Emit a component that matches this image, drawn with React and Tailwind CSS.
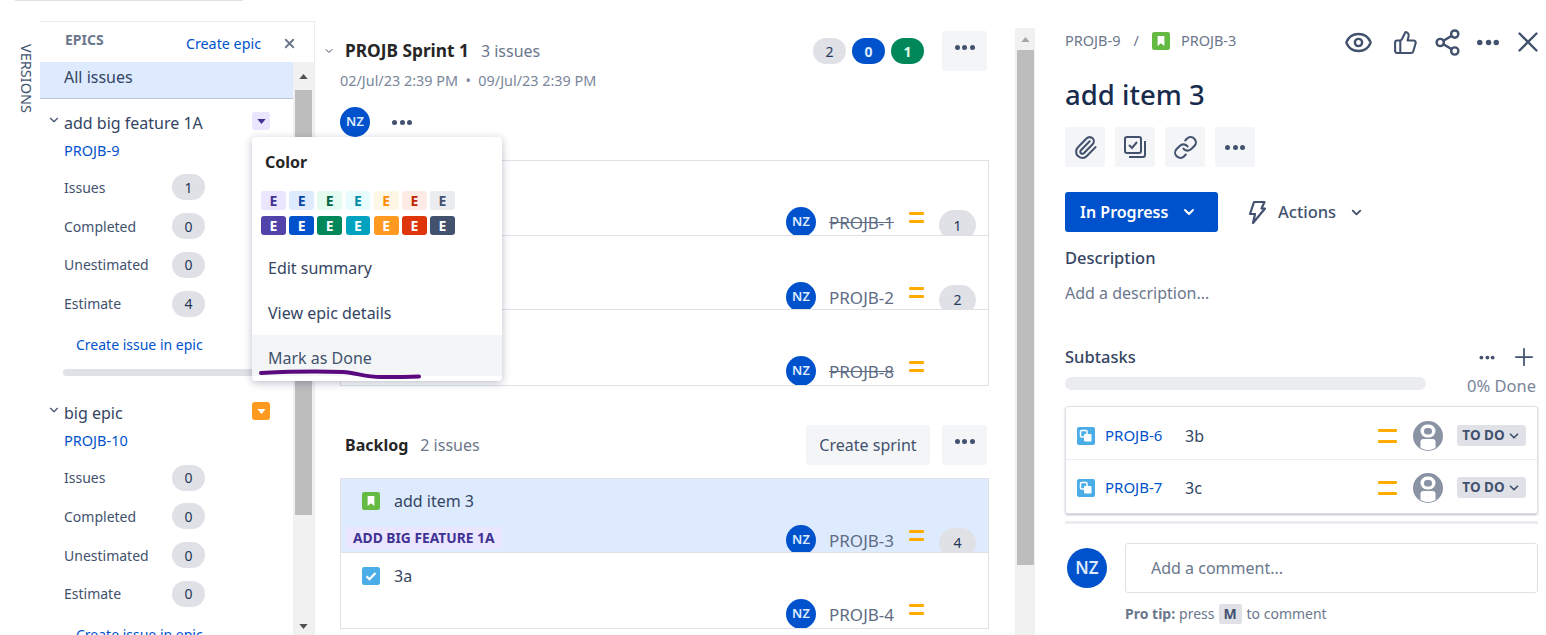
import React from 'react';
import { ChevronDown, Eye, Link, Paperclip, Plus, Share2, ThumbsUp, X } from 'lucide-react';

// --- SMALL SHARED PIECES ---
function Dots({ className = '' }) {
  return (
    <span className={`flex items-center gap-[2.5px] ${className}`}>
      <i className="w-[5px] h-[5px] rounded-full bg-[#42526e]" />
      <i className="w-[5px] h-[5px] rounded-full bg-[#42526e]" />
      <i className="w-[5px] h-[5px] rounded-full bg-[#42526e]" />
    </span>
  );
}

function Avatar({ size = 'w-[30px] h-[30px] text-[13px]' }) {
  return (
    <div className={`${size} shrink-0 rounded-full bg-[#0052cc] text-[#deebff] font-semibold flex items-center justify-center`}>
      NZ
    </div>
  );
}

function Priority({ wide }) {
  return (
    <span className={`flex flex-col ${wide ? 'w-[19px] gap-[8px]' : 'w-[15px] gap-[5px]'}`}>
      <i className="h-[3px] bg-[#ffab00] rounded-[1px]" />
      <i className="h-[3px] bg-[#ffab00] rounded-[1px]" />
    </span>
  );
}

function Pill({ children, className = 'bg-[#dfe1e6] text-[#253858]' }) {
  return (
    <span className={`w-[33px] h-[26px] rounded-full flex items-center justify-center text-[14px] ${className}`}>
      {children}
    </span>
  );
}

function StoryIcon() {
  return (
    <svg viewBox="0 0 16 16" className="w-[18px] h-[18px] shrink-0">
      <rect width="16" height="16" rx="2" fill="#65ba43" />
      <path d="M5 3.5h6v9l-3-2.6-3 2.6z" fill="#fff" />
    </svg>
  );
}

function TaskIcon() {
  return (
    <svg viewBox="0 0 16 16" className="w-[18px] h-[18px] shrink-0">
      <rect width="16" height="16" rx="2" fill="#4bade8" />
      <path d="M4 8.2l2.7 2.7L12 5.4" stroke="#fff" strokeWidth="2" fill="none" />
    </svg>
  );
}

function SubtaskIcon() {
  return (
    <svg viewBox="0 0 18 18" className="w-[18px] h-[18px] shrink-0">
      <rect width="18" height="18" rx="2" fill="#4bade8" />
      <rect x="3.5" y="3.5" width="6.5" height="6.5" rx="1" fill="none" stroke="#fff" strokeWidth="1.5" />
      <rect x="7" y="7" width="7.5" height="7.5" rx="1" fill="#fff" />
    </svg>
  );
}

function Triangle({ down, color = '#505050' }) {
  return (
    <svg viewBox="0 0 10 6" className="w-[9px] h-[5px]">
      <path d={down ? 'M0 0h10L5 6z' : 'M0 6h10L5 0z'} fill={color} />
    </svg>
  );
}

function EpicBlock({ title, epicKey, toggle, stats }) {
  return (
    <div className="pl-[24px] shrink-0">
      <div className="relative h-[41px] pt-[11px] flex text-[16px] leading-[26px] text-[#344563]">
        <ChevronDown size={14} className="ml-[-17px] mr-[3px] mt-[3px] text-[#42526e]" />
        <span>{title}</span>
        <span className={`absolute left-[188px] top-[13px] w-[18px] h-[18px] rounded-[3px] flex items-center justify-center ${toggle}`}>
          <Triangle down color={toggle.includes('ff991f') ? '#fff' : '#403294'} />
        </span>
      </div>
      <div className="h-[20px] text-[14.5px] leading-[20px] text-[#0052cc]">{epicKey}</div>
      <div className="mt-[8px]">
        {stats.map(([label, value]) => (
          <div key={label} className="h-[38.8px] flex items-center text-[14px] text-[#42526e]">
            <span className="w-[108px]">{label}</span>
            <Pill>{value}</Pill>
          </div>
        ))}
      </div>
      <div className="pl-[12px] pt-[12px] h-[48px] text-[14px] leading-[20px] text-[#0052cc]">Create issue in epic</div>
    </div>
  );
}

function IssueRow({ issueKey, done, points, summary, icon, epic, selected }) {
  return (
    <div className={`relative h-[74.5px] overflow-hidden border-b border-[#dfe1e6] last:border-b-0 ${selected ? 'bg-[#deebff]' : 'bg-white'}`}>
      {summary && (
        <div className={`flex items-center gap-[14px] pl-[21px] text-[16px] leading-[22px] text-[#344563] ${selected ? 'pt-[11px]' : 'pt-[12px]'}`}>
          {icon}
          <span>{summary}</span>
        </div>
      )}
      {epic && (
        <span className="absolute left-[5px] top-[48px] h-[22px] px-[7px] rounded-[3px] bg-[#eae6ff] text-[#403294] text-[13.8px] font-bold leading-[22px]">
          {epic}
        </span>
      )}
      <div className="absolute right-[12px] top-[46px] flex items-start">
        <Avatar />
        <span className={`w-[80px] ml-[13px] mt-[4px] text-[17px] leading-[24px] text-[#5e6c84] ${done ? 'line-through' : ''}`}>{issueKey}</span>
        <span className="mt-[5px]"><Priority /></span>
        <span className="w-[37px] ml-[15px] mt-[3px] h-[30px] rounded-full flex items-center justify-center text-[14px] text-[#253858] data-[on=true]:bg-[#dfe1e6]" data-on={points ? 'true' : 'false'}>
          {points}
        </span>
      </div>
    </div>
  );
}

function SubtaskRow({ issueKey, summary }) {
  return (
    <div className="h-[53px] flex items-center pl-[11px] pr-[11px] border-b border-[#ebecf0] first:pt-[5px] last:pt-[2px] last:border-b-0">
      <SubtaskIcon />
      <span className="w-[80px] ml-[10px] text-[15px] text-[#0052cc]">{issueKey}</span>
      <span className="flex-1 text-[16px] text-[#344563]">{summary}</span>
      <Priority wide />
      <svg viewBox="0 0 30 30" className="w-[30px] h-[30px] ml-[16px]">
        <circle cx="15" cy="15" r="15" fill="#8993a4" />
        <rect x="7.5" y="3.5" width="15" height="13" rx="6.5" fill="#fff" />
        <rect x="11" y="7" width="8" height="6.500" rx="3.200" fill="#8993a4" />
        <path d="M7.500 21a3 3 0 0 1 3-3h9a3 3 0 0 1 3 3v6a15 15 0 0 1-15 0z" fill="#fff" />
      </svg>
      <span className="w-[69px] h-[21px] ml-[14px] rounded-[3px] bg-[#dfe1e6] text-[#42526e] text-[13.5px] font-bold flex items-center justify-center gap-[2px]">
        TO DO <ChevronDown size={14} strokeWidth={3} />
      </span>
    </div>
  );
}

function IconButton({ children }) {
  return <div className="w-[40px] h-[40px] rounded-[3px] bg-[#f4f5f7] flex items-center justify-center text-[#42526e]">{children}</div>;
}

const lightSwatches = [
  ['bg-[#eae6ff]', 'text-[#403294]'], ['bg-[#deebff]', 'text-[#0747a6]'], ['bg-[#e3fcef]', 'text-[#006644]'],
  ['bg-[#e6fcff]', 'text-[#008da6]'], ['bg-[#fff7e6]', 'text-[#ff8b00]'], ['bg-[#ffebe6]', 'text-[#bf2600]'], ['bg-[#ebecf0]', 'text-[#42526e]'],
];
const darkSwatches = ['bg-[#5243aa]', 'bg-[#0052cc]', 'bg-[#00875a]', 'bg-[#00a3bf]', 'bg-[#ff991f]', 'bg-[#de350b]', 'bg-[#42526e]'];

export default function App() {
  return (
    <div className="relative w-[1546px] h-[635px] overflow-hidden bg-white font-['Noto_Sans',sans-serif] flex flex-col">
      <div className="h-px w-[228px] ml-[15px] bg-[#dfe1e6] shrink-0" />

      <div className="flex flex-1 min-h-0">
        {/* VERSIONS TAB */}
        <div className="w-[40px] shrink-0 pt-[43px] pl-[18px] text-[14.5px] leading-[18px] text-[#42526e]">
          <span className="[writing-mode:vertical-rl]">VERSIONS</span>
        </div>

        {/* EPICS PANEL */}
        <div className="w-[275px] shrink-0 mt-[20px] border-t border-r border-[#ebecf0] flex flex-col min-h-0">
          <div className="h-[40px] shrink-0 flex items-start pl-[25px] pr-[17px]">
            <span className="mt-[8px] text-[14px] leading-[20px] font-bold text-[#6b778c]">EPICS</span>
            <span className="ml-auto mt-[12px] text-[14.3px] leading-[20px] text-[#0052cc]">Create epic</span>
            <X size={15} strokeWidth={3} className="ml-[21px] mt-[14px] text-[#6b778c]" />
          </div>
          <div className="flex flex-1 min-h-0">
            <div className="flex-1 min-w-0 overflow-hidden flex flex-col">
              <div className="h-[37px] shrink-0 pl-[24px] bg-[#deebff] border-b border-[#c1c7d0] text-[16px] leading-[30px] text-[#344563]">All issues</div>
              <EpicBlock
                title="add big feature 1A"
                epicKey="PROJB-9"
                toggle="bg-[#eae6ff]"
                stats={[['Issues', 1], ['Completed', 0], ['Unestimated', 0], ['Estimate', 4]]}
              />
              <div className="h-[7px] ml-[23px] mr-[20px] mt-[-2px] mb-[13px] shrink-0 rounded-full bg-[#dfe1e6]" />
              <EpicBlock
                title="big epic"
                epicKey="PROJB-10"
                toggle="bg-[#ff991f]"
                stats={[['Issues', 0], ['Completed', 0], ['Unestimated', 0], ['Estimate', 0]]}
              />
            </div>
            <div className="w-[21px] shrink-0 bg-[#f1f1f1] flex flex-col items-center">
              <div className="h-[28px] flex items-center"><Triangle /></div>
              <div className="w-[17px] h-[425px] bg-[#bdbdbd]" />
              <div className="mt-auto h-[18px] flex items-center"><Triangle down /></div>
            </div>
          </div>
        </div>

        {/* SPRINT + BACKLOG */}
        <div className="w-[690px] shrink-0 pl-[25px] pr-[16px]">
          <div className="h-[106px] relative">
            <div className="flex items-center pt-[38px] text-[16px] leading-[24px]">
              <ChevronDown size={12} className="ml-[-17px] mr-[10px] text-[#42526e]" />
              <span className="font-bold text-[17.3px] text-[#262626]">PROJB Sprint 1</span>
              <span className="ml-[12px] text-[#6b778c]">3 issues</span>
            </div>
            <div className="mt-[8px] text-[14.4px] leading-[20px] text-[#7a869a]">02/Jul/23 2:39 PM&nbsp; •&nbsp; 09/Jul/23 2:39 PM</div>
            <div className="absolute right-[2px] top-[30px] flex items-start">
              <span className="flex gap-[6px] mt-[7px] mr-[18px]">
                <Pill>2</Pill>
                <Pill className="bg-[#0052cc] text-[#deebff] font-bold">0</Pill>
                <Pill className="bg-[#00875a] text-[#e3fcef] font-bold">1</Pill>
              </span>
              <div className="w-[45px] h-[40px] rounded-[3px] bg-[#f4f5f7] flex items-start justify-center pt-[14px]"><Dots /></div>
            </div>
          </div>
          <div className="flex items-center h-[30px] gap-[22px]">
            <Avatar />
            <Dots />
          </div>
          <div className="mt-[23px] border border-[#dfe1e6]">
            <IssueRow issueKey="PROJB-1" done points="1" />
            <IssueRow issueKey="PROJB-2" points="2" />
            <IssueRow issueKey="PROJB-8" done />
          </div>

          <div className="h-[92px] flex items-start">
            <span className="ml-[5px] mt-[47px] text-[16px] leading-[24px] font-bold text-[#262626]">Backlog</span>
            <span className="ml-[12px] mt-[47px] text-[16px] leading-[24px] text-[#6b778c]">2 issues</span>
            <div className="ml-auto mr-[2px] mt-[39px] flex gap-[12px]">
              <div className="w-[124px] h-[40px] rounded-[3px] bg-[#f4f5f7] flex items-center justify-center text-[16px] text-[#42526e]">Create sprint</div>
              <div className="w-[45px] h-[40px] rounded-[3px] bg-[#f4f5f7] flex items-start justify-center pt-[14px]"><Dots /></div>
            </div>
          </div>
          <div className="border border-[#dfe1e6]">
            <IssueRow issueKey="PROJB-3" points="4" summary="add item 3" icon={<StoryIcon />} epic="ADD BIG FEATURE 1A" selected />
            <IssueRow issueKey="PROJB-4" summary="3a" icon={<TaskIcon />} />
          </div>
        </div>

        {/* MAIN SCROLLBAR */}
        <div className="w-[20px] mt-[27px] ml-[10px] shrink-0 bg-[#f1f1f1] flex flex-col items-center">
          <div className="h-[22px] flex items-center"><Triangle color="#a6a6a6" /></div>
          <div className="w-[17px] h-[515px] bg-[#bdbdbd]" />
        </div>

        {/* ISSUE DETAIL */}
        <div className="flex-1 min-w-0 pl-[30px] pr-[8px] flex flex-col">
          <div className="h-[40px] mt-[20px] flex items-center text-[14.5px] text-[#6b778c]">
            <span>PROJB-9</span>
            <span className="ml-[13px] mr-[13px]">/</span>
            <StoryIcon />
            <span className="ml-[11px]">PROJB-3</span>
            <div className="ml-auto mt-[2px] flex items-center text-[#42526e]">
              <Eye size={29} strokeWidth={2} />
              <ThumbsUp size={25} strokeWidth={2} className="ml-[20px]" />
              <Share2 size={29} strokeWidth={2} className="ml-[15px]" />
              <Dots className="ml-[16px] scale-110" />
              <svg viewBox="0 0 20 20" className="w-[20px] h-[20px] ml-[20px]" fill="none" stroke="currentColor" strokeWidth="2.4" strokeLinecap="round">
                <path d="M1.500 1.500l17 17M18.500 1.500l-17 17" />
              </svg>
            </div>
          </div>
          <div className="mt-[13px] h-[42px] text-[27.5px] leading-[42px] font-medium text-[#172b4d]">add item 3</div>
          <div className="mt-[11px] flex gap-[10px]">
            <IconButton><Paperclip size={25} strokeWidth={2} /></IconButton>
            <IconButton>
              <svg viewBox="0 0 24 24" className="w-[24px] h-[24px]" fill="none" stroke="currentColor" strokeWidth="2">
                <rect x="2" y="2" width="16" height="16" rx="2" />
                <path d="M6 10l3 3 5-6" />
                <path d="M22 6v14a2 2 0 0 1-2 2H6" />
              </svg>
            </IconButton>
            <IconButton><Link size={25} strokeWidth={2} /></IconButton>
            <IconButton><Dots /></IconButton>
          </div>
          <div className="mt-[25px] flex items-center">
            <div className="w-[153px] h-[40px] rounded-[3px] bg-[#0052cc] text-white text-[16px] font-semibold flex items-center pl-[15px]">
              In Progress
              <ChevronDown size={16} strokeWidth={3} className="ml-[13px]" />
            </div>
            <svg viewBox="0 0 18 25" className="w-[18px] h-[25px] ml-[30px] text-[#42526e]" fill="none" stroke="currentColor" strokeWidth="2.2" strokeLinejoin="round">
              <path d="M6 2h10.500l-3 6.500h3.500L5 23l2-9H2z" />
            </svg>
            <span className="ml-[12px] text-[16.5px] font-medium text-[#42526e]">Actions</span>
            <ChevronDown size={15} strokeWidth={3} className="ml-[13px] text-[#42526e]" />
          </div>
          <div className="mt-[14px] h-[24px] text-[16.5px] leading-[24px] font-medium text-[#344563]">Description</div>
          <div className="mt-[11px] h-[24px] text-[16px] leading-[24px] text-[#6b778c]">Add a description...</div>
          <div className="mt-[40px] h-[24px] flex items-center text-[16.5px] font-medium text-[#344563]">
            Subtasks
            <Dots className="ml-auto scale-75" />
            <Plus size={28} strokeWidth={1.5} className="ml-[13px] text-[#42526e]" />
          </div>
          <div className="mt-[6px] h-[24px] flex items-start">
            <div className="w-[361px] h-[13px] mt-[2px] rounded-full bg-[#ebecf0]" />
            <span className="ml-auto mr-[2px] mt-[-1px] text-[16.5px] leading-[24px] text-[#7a869a]">0% Done</span>
          </div>
          <div className="mt-[7px] h-[108px] rounded-[3px] border border-[#dfe1e6] shadow-[0_1px_2px_rgba(9,30,66,0.3)]">
            <SubtaskRow issueKey="PROJB-6" summary="3b" />
            <SubtaskRow issueKey="PROJB-7" summary="3c" />
          </div>
          <div className="mt-[7px] h-[3px] bg-[#ebecf0]" />
          <div className="mt-[19px] flex items-start">
            <div className="ml-[2px] mt-[5px]"><Avatar size="w-[40px] h-[40px] text-[17px]" /></div>
            <div className="ml-[18px] flex-1 h-[50px] rounded-[3px] border border-[#dfe1e6] flex items-center pl-[25px] text-[16px] text-[#6b778c]">Add a comment...</div>
          </div>
          <div className="mt-[10px] ml-[60px] flex items-center text-[14px] text-[#6b778c]">
            <b className="font-bold">Pro tip:</b>
            <span className="ml-[4px]">press</span>
            <b className="ml-[4px] w-[23px] h-[20px] rounded-[2px] bg-[#dfe1e6] font-bold text-[#42526e] flex items-center justify-center">M</b>
            <span className="ml-[5px]">to comment</span>
          </div>
        </div>
      </div>

      {/* EPIC ACTIONS MENU */}
      <div className="absolute left-[252px] top-[137px] w-[250px] h-[244px] rounded-[4px] bg-white shadow-[0_2px_8px_rgba(9,30,66,0.28)] flex flex-col">
        <div className="pl-[13px] pt-[14px] h-[54px] text-[16px] leading-[22px] font-bold text-[#262626]">Color</div>
        <div className="pl-[9px] flex gap-[3.4px]">
          {lightSwatches.map(([bg, fg], i) => (
            <span key={i} className={`${bg} ${fg} w-[24.8px] h-[19px] rounded-[3px] text-[14px] font-bold flex items-center justify-center`}>E</span>
          ))}
        </div>
        <div className="pl-[9px] mt-[6px] flex gap-[3.4px]">
          {darkSwatches.map((bg, i) => (
            <span key={i} className={`${bg} text-white w-[24.8px] h-[19px] rounded-[3px] text-[14px] font-bold flex items-center justify-center`}>E</span>
          ))}
        </div>
        <div className="mt-[10px] h-[45px] pl-[16px] flex items-center text-[16px] text-[#344563]">Edit summary</div>
        <div className="h-[45px] pl-[16px] flex items-center text-[16px] text-[#344563]">View epic details</div>
        <div className="h-[41px] pl-[16px] pt-[4px] bg-[#f4f5f7] flex items-center text-[16px] text-[#42526e]">Mark as Done</div>
      </div>
      <svg className="absolute left-[255px] top-[366px] w-[170px] h-[16px]" viewBox="0 0 170 16" fill="none">
        <path d="M6 7c20-1 55-2 82-1 14 1 22 5 38 5 12 0 25 0 38-0.500" stroke="#5a0a7e" strokeWidth="4" strokeLinecap="round" />
      </svg>
    </div>
  );
}
